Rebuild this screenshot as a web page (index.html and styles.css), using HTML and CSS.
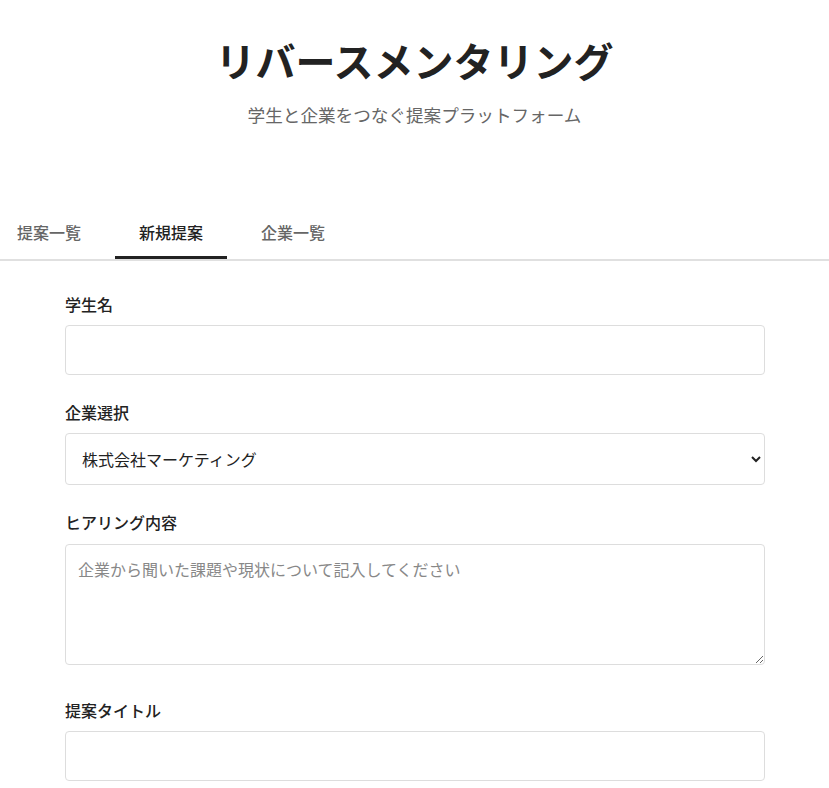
FILE: index.html
```html
<!DOCTYPE html>
<html lang="ja">
<head>
<meta charset="utf-8">
<title>リバースメンタリング</title>
<link rel="stylesheet" href="styles.css">
</head>
<body>
<header class="header">
  <h1 class="title">リバースメンタリング</h1>
  <p class="subtitle">学生と企業をつなぐ提案プラットフォーム</p>
</header>
<nav class="tabs">
  <button class="tab">提案一覧</button>
  <button class="tab active">新規提案</button>
  <button class="tab">企業一覧</button>
</nav>
<main class="content">
  <form class="form">
    <div class="field">
      <label class="label" for="name">学生名</label>
      <input class="control" id="name" type="text">
    </div>
    <div class="field">
      <label class="label" for="company">企業選択</label>
      <select class="control select" id="company">
        <option>株式会社マーケティング</option>
      </select>
    </div>
    <div class="field field-tall">
      <label class="label" for="hearing">ヒアリング内容</label>
      <textarea class="control textarea" id="hearing" placeholder="企業から聞いた課題や現状について記入してください"></textarea>
    </div>
    <div class="field">
      <label class="label" for="ptitle">提案タイトル</label>
      <input class="control" id="ptitle" type="text">
    </div>
  </form>
</main>
</body>
</html>
```
FILE: styles.css
```css
* { box-sizing: border-box; }
html, body { margin: 0; padding: 0; background: #fff; }
body {
  font-family: "Noto Sans CJK JP", "Noto Sans", sans-serif;
  color: #222;
}
.header {
  text-align: center;
  padding: 36px 0 0;
  height: 207px;
}
.title {
  margin: 0;
  font-size: 40px;
  line-height: 48px;
  font-weight: 700;
  color: #222;
}
.subtitle {
  margin: 18px 0 0;
  font-size: 17.6px;
  line-height: 26px;
  color: #666;
}
.tabs {
  display: flex;
  gap: 10px;
  border-bottom: 2px solid #e0e0e0;
  margin-left: -7px;
}
.tab {
  font-family: inherit;
  font-size: 16px;
  font-weight: 500;
  line-height: 24px;
  color: #666;
  background: none;
  border: none;
  padding: 13px 24px 12px;
  border-bottom: 3px solid transparent;
  cursor: pointer;
}
.tab.active {
  color: #222;
  border-bottom-color: #222;
}
.content {
  padding: 32px 64px 0 65px;
}
.form {
  width: 700px;
  display: flex;
  flex-direction: column;
  gap: 26px;
}
.field {
  display: flex;
  flex-direction: column;
}
.field-tall {
  margin-bottom: 8px;
}
.label {
  font-size: 16px;
  font-weight: 500;
  line-height: 22px;
  margin-bottom: 10px;
  color: #222;
}
.control {
  width: 700px;
  height: 50px;
  border: 1px solid #ddd;
  border-radius: 4px;
  padding: 12px;
  font-family: inherit;
  font-size: 16px;
  color: #222;
  background: #fff;
}
.select {
  height: 52px;
  padding: 12px;
}
.textarea {
  margin-top: 1px;
  height: 121px;
  line-height: 24px;
  resize: vertical;
  padding: 12px;
}
.textarea::placeholder { color: #888; }
```
